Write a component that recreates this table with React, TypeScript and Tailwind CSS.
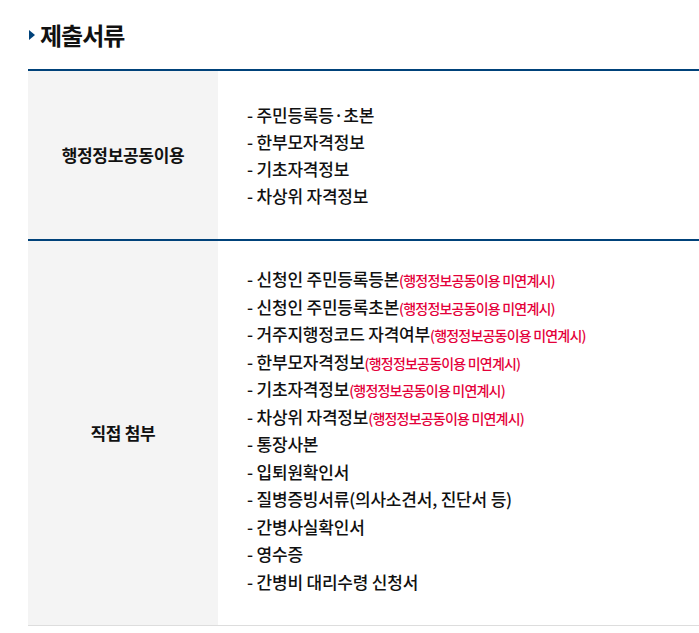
const font = { fontFamily: '"Noto Sans CJK KR", "Noto Sans", sans-serif' }

const shared = ['주민등록등·초본', '한부모자격정보', '기초자격정보', '차상위 자격정보']

const direct: { text: string; note?: boolean }[] = [
  { text: '신청인 주민등록등본', note: true },
  { text: '신청인 주민등록초본', note: true },
  { text: '거주지행정코드 자격여부', note: true },
  { text: '한부모자격정보', note: true },
  { text: '기초자격정보', note: true },
  { text: '차상위 자격정보', note: true },
  { text: '통장사본' },
  { text: '입퇴원확인서' },
  { text: '질병증빙서류(의사소견서, 진단서 등)' },
  { text: '간병사실확인서' },
  { text: '영수증' },
  { text: '간병비 대리수령 신청서' },
]

export default function App() {
  return (
    <div className="bg-white min-h-[633px] w-[699px] overflow-hidden text-[#111]" style={font}>
      <div className="pl-[28px] pt-[18px]">
        {/* Title */}
        <h2 className="flex items-center h-[34px] text-[24px] font-bold tracking-[-1px]">
          <span className="w-0 h-0 border-y-[5px] border-y-transparent border-l-[6px] border-l-[#00427a] ml-[1px] mr-[5px]" />
          제출서류
        </h2>

        {/* Table */}
        <div className="mt-[17px] border-t-[2px] border-[#00427a] w-[700px]">
          <div className="flex border-b-[2px] border-[#00427a]">
            <div className="w-[190px] shrink-0 bg-[#f4f4f4] flex items-center justify-center font-bold text-[17px] tracking-[-0.3px]">
              행정정보공동이용
            </div>
            <ul className="pl-[29px] pt-[30px] pb-[30px] text-[17px] font-medium leading-[27px] tracking-[-0.2px]">
              {shared.map((t) => (
                <li key={t}>- {t}</li>
              ))}
            </ul>
          </div>
          <div className="flex border-b border-[#dddddd]">
            <div className="w-[190px] shrink-0 bg-[#f4f4f4] flex items-center justify-center font-bold text-[17px] tracking-[-0.3px]">
              직접 첨부
            </div>
            <ul className="pl-[29px] pt-[24px] pb-[30px] text-[17px] font-medium leading-[27.5px] tracking-[-0.2px]">
              {direct.map((d) => (
                <li key={d.text}>
                  - {d.text}
                  {d.note && (
                    <span className="text-[14px] leading-none text-[#e4003a] tracking-[-0.8px]">(행정정보공동이용 미연계시)</span>
                  )}
                </li>
              ))}
            </ul>
          </div>
        </div>
      </div>
    </div>
  )
}
